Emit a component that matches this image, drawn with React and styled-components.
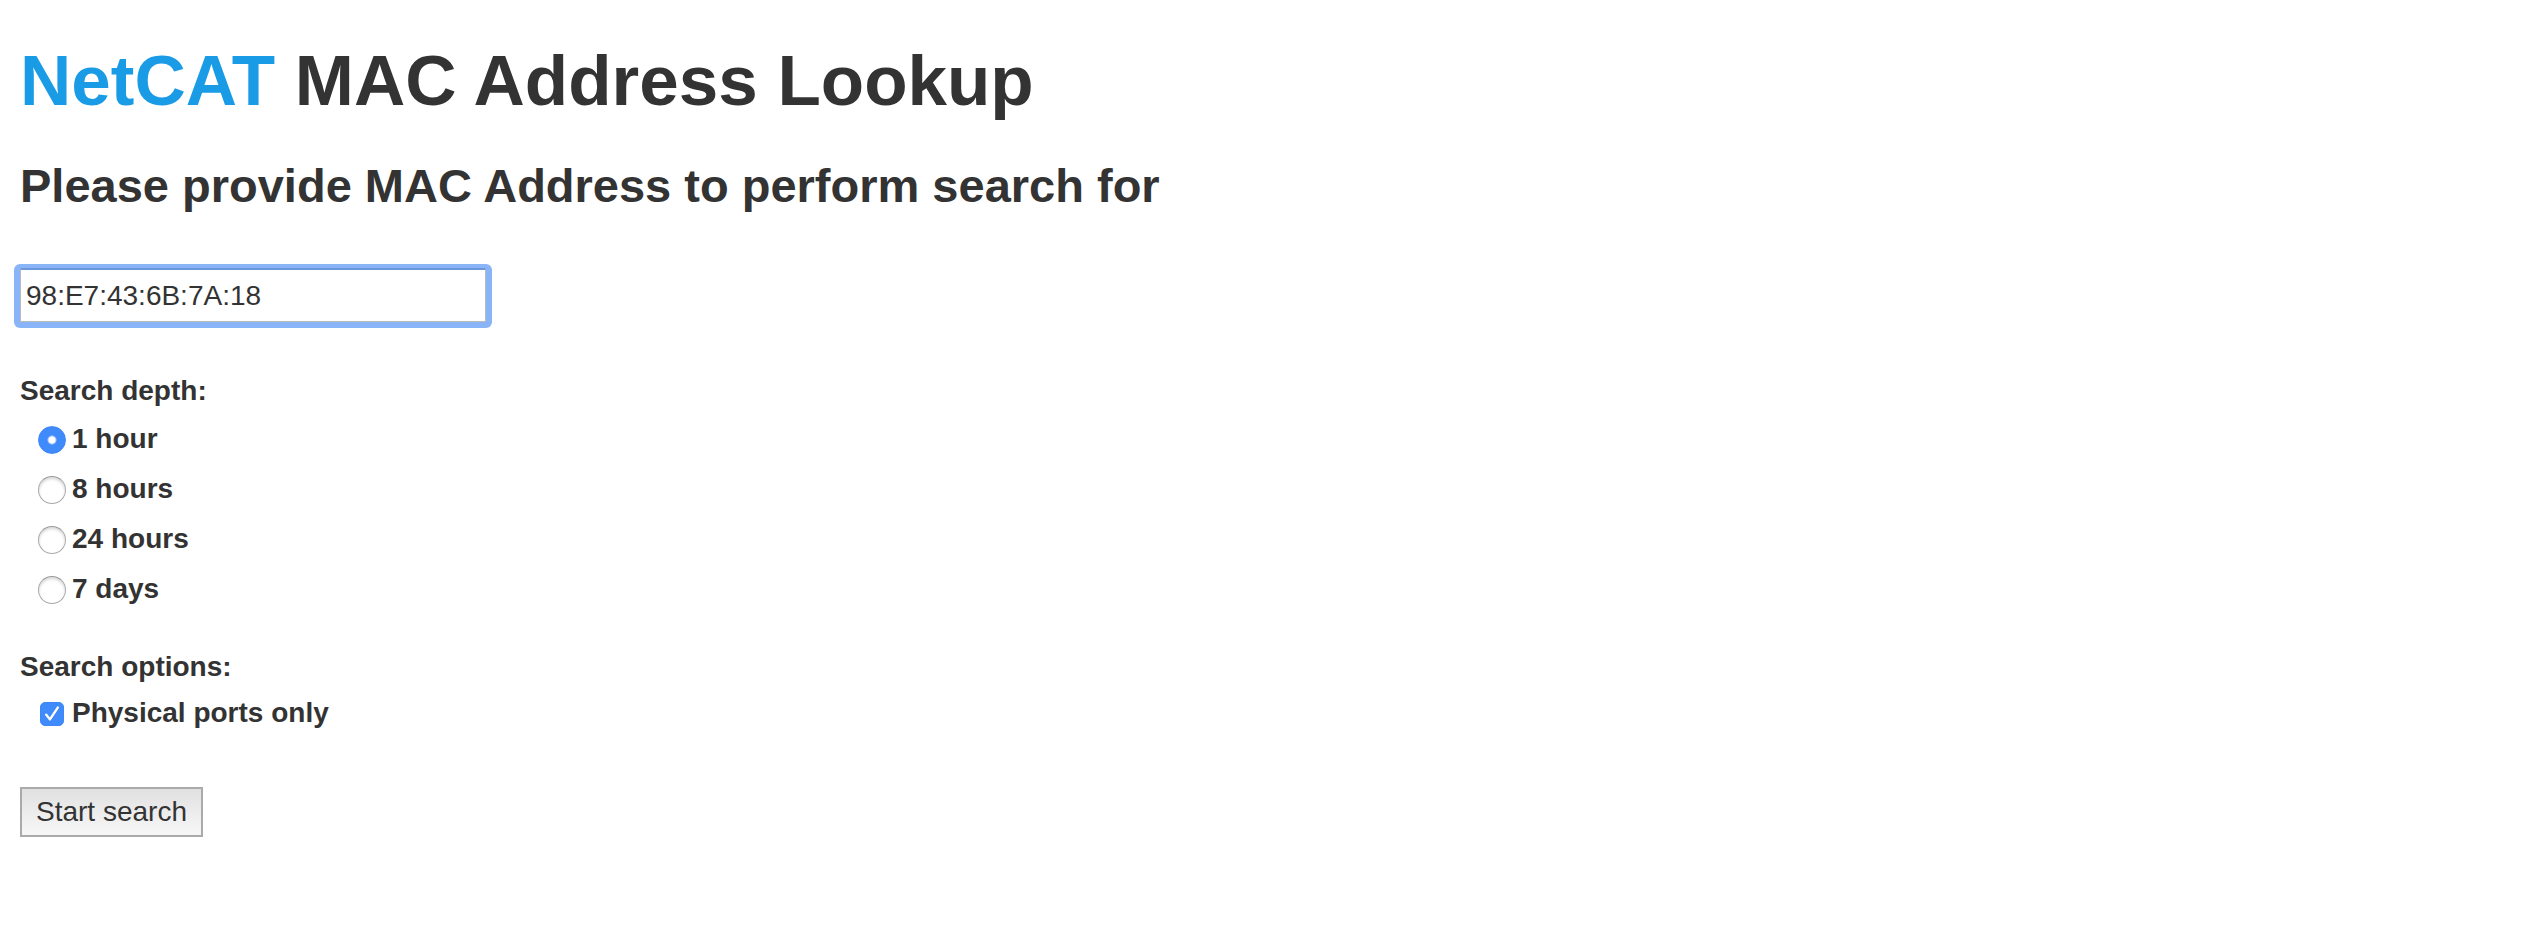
import React, { useState } from 'react';
import styled, { createGlobalStyle } from 'styled-components';

const GlobalStyle = createGlobalStyle`
  *, *::before, *::after { box-sizing: border-box; }
  body {
    margin: 0;
    background: #fff;
    color: #333;
    font: 28px/40px "Liberation Sans", Arial, sans-serif;
  }
`;

const Page = styled.main`
  padding: 41px 20px 60px;
`;

const Title = styled.h1`
  margin: 0 0 38px;
  font-size: 71px;
  line-height: 80px;
  font-weight: 700;
`;

const Brand = styled.span`
  color: #1a9be6;
`;

const Subtitle = styled.h2`
  margin: 0 0 55px;
  font-size: 47px;
  line-height: 54px;
  font-weight: 700;
`;

const Form = styled.form`
  display: flex;
  flex-direction: column;
  align-items: flex-start;
  gap: 49px;
`;

const FocusRing = styled.div`
  display: flex;
  width: 478px;
  max-width: 100%;
  margin: -4px -6px -6px;
  padding: 4px 6px 6px;
  border-radius: 6px;
  background: #89b4f8;
`;

const AddressInput = styled.input`
  width: 100%;
  height: 54px;
  padding: 1px 5px 0;
  border: 1px solid #bbb;
  border-top: 2px solid #6a97dc;
  border-radius: 0;
  outline: none;
  background: #fff;
  color: inherit;
  font: inherit;
`;

const Groups = styled.div`
  display: flex;
  flex-direction: column;
  gap: 33px;
`;

const Group = styled.fieldset`
  min-width: 0;
  margin: 0;
  padding: 0;
  border: 0;
`;

const Legend = styled.legend`
  padding: 0 0 ${(p) => p.$gap}px;
  font-weight: 700;
`;

const Option = styled.label`
  display: flex;
  align-items: center;
  gap: 6px;
  height: 50px;
  padding-left: 18px;
  font-weight: 700;
`;

const Radio = styled.input`
  appearance: none;
  flex: none;
  width: 28px;
  height: 28px;
  margin: 2px 0 0;
  border: 1px solid #aaa;
  border-top-color: #999;
  border-radius: 50%;
  background: #fff;
  box-shadow: inset 0 2px 3px rgba(0, 0, 0, 0.16);

  &:checked {
    border-color: #3f87f8;
    background: radial-gradient(circle, #fff 0 3px, #408bfc 5px);
    box-shadow: none;
  }
`;

const CheckHolder = styled.span`
  display: grid;
  flex: none;
  width: 28px;
  margin-top: 2px;
  place-items: center;

  & > * {
    grid-area: 1 / 1;
  }
`;

const Checkbox = styled.input`
  appearance: none;
  width: 24px;
  height: 24px;
  margin: 0;
  border: 1px solid #aaa;
  border-radius: 5px;
  background: #fff;

  &:checked {
    border-color: #3f87f8;
    background: #408bfc;
  }

  &:not(:checked) + svg {
    visibility: hidden;
  }
`;

const CheckMark = styled.svg`
  width: 24px;
  height: 24px;
  pointer-events: none;
`;

const SubmitButton = styled.button`
  height: 50px;
  padding: 0 14px;
  border: 2px solid #aaa;
  border-radius: 0;
  background: linear-gradient(#e1e1e1, #f7f7f7);
  color: inherit;
  font: inherit;
`;

const depths = ['1 hour', '8 hours', '24 hours', '7 days'];

export default function App() {
  const [mac, setMac] = useState('98:E7:43:6B:7A:18');
  const [depth, setDepth] = useState(depths[0]);
  const [physical, setPhysical] = useState(true);

  return (
    <>
      <GlobalStyle />
      <Page>
        <Title><Brand>NetCAT</Brand> MAC Address Lookup</Title>
        <Subtitle id="prompt">Please provide MAC Address to perform search for</Subtitle>
        <Form onSubmit={(e) => e.preventDefault()}>
          <FocusRing>
            <AddressInput
              type="text"
              aria-labelledby="prompt"
              value={mac}
              onChange={(e) => setMac(e.target.value)}
            />
          </FocusRing>
          <Groups>
            <Group>
              <Legend $gap={3}>Search depth:</Legend>
              {depths.map((d) => (
                <Option key={d}>
                  <Radio type="radio" name="depth" checked={depth === d} onChange={() => setDepth(d)} />
                  {d}
                </Option>
              ))}
            </Group>
            <Group>
              <Legend $gap={1}>Search options:</Legend>
              <Option>
                <CheckHolder>
                  <Checkbox type="checkbox" checked={physical} onChange={(e) => setPhysical(e.target.checked)} />
                  <CheckMark viewBox="0 0 24 24" aria-hidden="true">
                    <path d="M6.2 13.6 10 18.2 17.8 6.4" fill="none" stroke="#2668cf" strokeOpacity="0.5" strokeWidth="2.4" strokeLinecap="round" strokeLinejoin="round" />
                    <path d="M6.2 12.8 10 17.4 17.8 5.6" fill="none" stroke="#fff" strokeWidth="2.4" strokeLinecap="round" strokeLinejoin="round" />
                  </CheckMark>
                </CheckHolder>
                Physical ports only
              </Option>
            </Group>
          </Groups>
          <SubmitButton type="submit">Start search</SubmitButton>
        </Form>
      </Page>
    </>
  );
}
